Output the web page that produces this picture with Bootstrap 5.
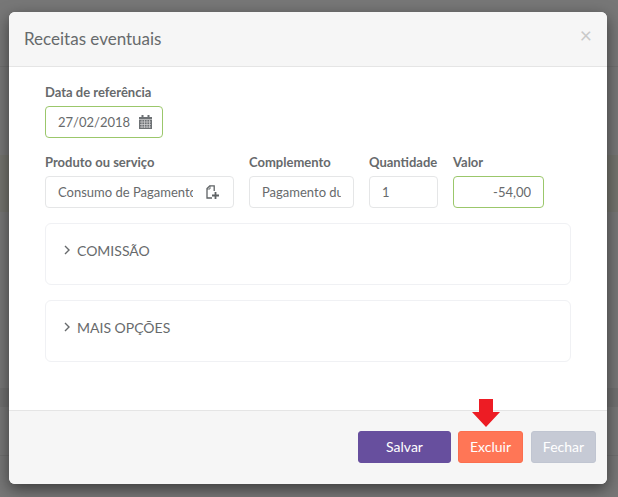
<!DOCTYPE html>
<html lang="pt-BR"><head><meta charset="utf-8">
<title>Receitas eventuais</title>
<link rel="stylesheet" href="https://cdn.jsdelivr.net/npm/bootstrap@5.3.0/dist/css/bootstrap.min.css">
<style>
html,body{height:497px;overflow:hidden}
body{background:linear-gradient(#777 0 66px,#6f6f6f 66px 67px,#777 67px 155px,#74746e 155px 212px,#777 212px 388px,#707070 388px 407px,#777 407px 455px,#6f6f6f 455px 456px,#777 456px);font-family:Lato,"Liberation Sans",sans-serif;color:#676a6c}
.stage{height:497px;padding:12px 11px 13px 9px}
.dlg{position:relative;height:472px;background:#fff;border:0;border-radius:6px;box-shadow:0 5px 15px rgba(0,0,0,.5);overflow:visible}
.dlg .modal-header{height:55px;padding:0 15px;background:#f6f6f6;border-bottom:1px solid #e5e5e5;border-radius:6px 6px 0 0;align-items:flex-start}
.dlg-title{font-size:17px;font-weight:400;line-height:54px;margin:0;color:#676a6c}
.dlg-x{border:0;background:none;padding:0;font-size:21px;line-height:46px;color:#c9c9c9;margin-right:0;font-weight:400}
.dlg .modal-body{height:343px;flex:none;padding:16px 36px 0 36px}
.dlg .modal-footer{height:74px;padding:20px 11px 21px;background:#f6f6f6;border-top:1px solid #e5e5e5;border-radius:0 0 6px 6px;gap:7px;justify-content:flex-end;flex-wrap:nowrap}
.dlg .modal-footer .btn{margin:0;height:32px;padding:0;font-size:14px;line-height:30px;border-radius:3px;color:#fff}
.lbl{display:block;font-size:13px;font-weight:700;line-height:18px;margin:0 0 5px;color:#676a6c;white-space:nowrap}
.fld{height:32px;border:1px solid #e5e6e7;border-radius:4px;background:#fff;font-size:13px;color:#676a6c;padding:0 12px;width:100%;line-height:30px}
.fld:focus{box-shadow:none;border-color:#e5e6e7;color:#676a6c}
.fld.okay,.fld.okay:focus{border-color:#9bc76b}
.w-a{width:189px}.w-b{width:105px}.w-c{width:69px}.w-d{width:91px}.w-date{width:118px}
.pad-icon{padding-right:40px}
.fieldrow{gap:15px;margin-top:15px}
.ic{position:absolute;right:11px;top:0;height:32px;display:flex;align-items:center}
.ic-doc{right:15px}
.box{height:62px;border:1px solid #f0f1f4;border-radius:6px;margin-top:15px;padding:17px 19px 17px 18px;font-size:14px;line-height:20px;width:526px;display:flex;align-items:flex-start;gap:7px;color:#676a6c}
.btn-salvar{width:93px;background:#674f9e;border:1px solid #674f9e}
.btn-excluir{width:65px;background:#ff7656;border:1px solid #fb6e4e;margin-right:1px!important}
.btn-fechar{width:65px;background:#c6cad5;border:1px solid #c0c5d1}
.arrow{position:absolute;left:463px;top:387px;width:28px;height:28px}
</style></head>
<body>
<div class="stage">
<div class="modal-content dlg">
  <div class="modal-header d-flex justify-content-between">
    <h4 class="dlg-title">Receitas eventuais</h4>
    <button type="button" class="dlg-x" aria-label="Fechar">×</button>
  </div>
  <div class="modal-body">
    <div>
      <label class="lbl">Data de referência</label>
      <div class="position-relative w-date">
        <input class="form-control fld okay" value="27/02/2018">
        <span class="ic"><svg width="13" height="14" viewBox="0 0 13 14"><path fill="#6d7174" d="M0 2h2.5V0h2v2h4V0h2v2H13v12H0z"/><path stroke="#d5d6d7" stroke-width=".7" d="M0 4.5h13M1 7h11M1 9.5h11M1 12h11M3 5v8M5.5 5v8M8 5v8M10.5 5v8"/></svg></span>
      </div>
    </div>
    <div class="d-flex fieldrow">
      <div class="w-a">
        <label class="lbl">Produto ou serviço</label>
        <div class="position-relative">
          <input class="form-control fld pad-icon" value="Consumo de Pagamento Mensal">
          <span class="ic ic-doc"><svg width="13" height="14" viewBox="0 0 13 14"><path fill="none" stroke="#5f6365" stroke-width="1.3" d="M6 13H1V3.6L3.8 .8h4.4V6"/><path fill="none" stroke="#5f6365" stroke-width=".9" d="M1 4h3V.8"/><path stroke="#5f6365" stroke-width="1.8" d="M6 10.5h7M9.5 7v7"/></svg></span>
        </div>
      </div>
      <div class="w-b">
        <label class="lbl">Complemento</label>
        <input class="form-control fld" value="Pagamento duplicado">
      </div>
      <div class="w-c">
        <label class="lbl">Quantidade</label>
        <input class="form-control fld" value="1">
      </div>
      <div class="w-d">
        <label class="lbl">Valor</label>
        <input class="form-control fld okay text-end" value="-54,00">
      </div>
    </div>
    <div class="box"><svg class="mt-1" width="6" height="10" viewBox="0 0 6 10"><path fill="none" stroke="#676a6c" stroke-width="1.4" d="M1 1l4 4-4 4"/></svg><span>COMISSÃO</span></div>
    <div class="box"><svg class="mt-1" width="6" height="10" viewBox="0 0 6 10"><path fill="none" stroke="#676a6c" stroke-width="1.4" d="M1 1l4 4-4 4"/></svg><span>MAIS OPÇÕES</span></div>
  </div>
  <div class="modal-footer">
    <button type="button" class="btn btn-salvar">Salvar</button>
    <button type="button" class="btn btn-excluir">Excluir</button>
    <button type="button" class="btn btn-fechar">Fechar</button>
  </div>
  <svg class="arrow" viewBox="0 0 28 28"><path fill="#ed1c24" d="M7 0h14v13h7L14 28 0 13h7z"/></svg>
</div>
</div>
<script src="https://cdn.jsdelivr.net/npm/bootstrap@5.3.0/dist/js/bootstrap.bundle.min.js"></script>
</body></html>
